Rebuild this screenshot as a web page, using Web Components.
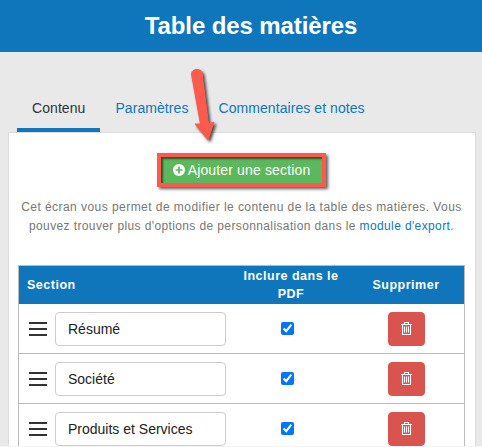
<!DOCTYPE html>
<html lang="fr">
<head>
<meta charset="utf-8">
<title>Table des matières</title>
<style>
  html, body { margin: 0; height: 100%; overflow: hidden; background: #e9e9e9; }
  body { font-family: "Liberation Sans", Arial, sans-serif; }
</style>
</head>
<body>
<toc-page>
  <page-header>Table des matières</page-header>
  <tab-bar>
    <tab-item active>Contenu</tab-item>
    <tab-item>Paramètres</tab-item>
    <tab-item>Commentaires et notes</tab-item>
  </tab-bar>
  <toc-card>
    <add-button>Ajouter une section</add-button>
    <p>Cet écran vous permet de modifier le contenu de la table des matières. Vous <span style="letter-spacing:.38px">pouvez trouver plus d'options de personnalisation dans le <a href="#" style="color:#0f76bc;text-decoration:none">module d'export</a>.</span></p>
    <section-table>
      <section-row value="Résumé"></section-row>
      <section-row value="Société"></section-row>
      <section-row value="Produits et Services"></section-row>
    </section-table>
  </toc-card>
  <callout-arrow></callout-arrow>
</toc-page>

<script>
// Small helper, every component just sets its markup in an open shadow root
class BaseElement extends HTMLElement {
  constructor() {
    super();
    this.attachShadow({ mode: 'open' });
  }
  connectedCallback() {
    this.shadowRoot.innerHTML = this.markup();
  }
}

class TocPage extends BaseElement {
  markup() {
    return `
      <style>
        :host {
          display: flex; flex-direction: column; position: relative; box-sizing: border-box;
          height: 447px; overflow: hidden; border-bottom: 1px solid #f4f4f4;
        }
      </style>
      <slot></slot>
    `;
  }
}

class PageHeader extends BaseElement {
  markup() {
    return `
      <style>
        :host {
          display: flex; align-items: center; justify-content: center; flex: none;
          height: 52px; padding-left: 20px;
          background: #0f76bc; color: #fff;
          font-size: 24px; font-weight: 700; letter-spacing: -.1px;
        }
      </style>
      <slot></slot>
    `;
  }
}

class TabBar extends BaseElement {
  markup() {
    return `
      <style>
        :host { display: flex; flex: none; padding: 36px 0 0 17px; }
      </style>
      <slot></slot>
    `;
  }
}

class TabItem extends BaseElement {
  markup() {
    const active = this.hasAttribute('active');
    return `
      <style>
        :host {
          display: block; padding: 12px 15px 12px;
          font-size: 14px; line-height: 16px; letter-spacing: .07px;
          color: ${active ? '#333' : '#0f76bc'};
          border-bottom: 4px solid ${active ? '#0f76bc' : 'transparent'};
        }
      </style>
      <slot></slot>
    `;
  }
}

class TocCard extends BaseElement {
  markup() {
    return `
      <style>
        :host {
          display: flex; flex-direction: column; flex: 1;
          margin: 0 6px 0 8px; padding: 20px 10px 0 9px;
          background: #fff; border: 1px solid #ddd; border-bottom: 0;
        }
        ::slotted(p) {
          margin: 11px 0 29px; text-align: center; color: #777;
          font-size: 12px; line-height: 19px; letter-spacing: .45px;
        }
      </style>
      <slot></slot>
    `;
  }
}

class AddButton extends BaseElement {
  markup() {
    return `
      <style>
        :host {
          display: flex; align-items: center; justify-content: center; gap: 3px;
          align-self: center; box-sizing: border-box; width: 169px; height: 34px; flex: none;
          background: #5cb85c; color: #fff;
          border: 4px solid #fd5a4e;
          box-shadow: 2px 2px 3px rgba(0,0,0,.65), inset 2px 2px 2px rgba(0,0,0,.55);
          font-size: 14px; letter-spacing: .15px;
        }
        svg { width: 12px; height: 12px; flex: none; }
      </style>
      <svg viewBox="0 0 14 14" aria-hidden="true">
        <circle cx="7" cy="7" r="7" fill="#fff"/>
        <path d="M6 3h2v3h3v2H8v3H6V8H3V6h3z" fill="#5cb85c"/>
      </svg>
      <slot></slot>
    `;
  }
}

class SectionTable extends BaseElement {
  markup() {
    return `
      <style>
        :host { display: block; flex: none; border: 1px solid #bbb; border-bottom: 0; }
        .head {
          display: grid; grid-template-columns: 208px 120px 1fr; align-items: center;
          height: 38px; background: #0f76bc; color: #fff;
          font-size: 12.5px; font-weight: 700; line-height: 18px; letter-spacing: .5px;
        }
        .head div { text-align: center; }
        .head div:first-child { text-align: left; padding-left: 8px; }
        .head div:nth-child(2) { padding-left: 8px; }
        .head div:last-child { padding-left: 1px; }
      </style>
      <div class="head">
        <div>Section</div>
        <div>Inclure dans le PDF</div>
        <div>Supprimer</div>
      </div>
      <slot></slot>
    `;
  }
}

class SectionRow extends BaseElement {
  markup() {
    return `
      <style>
        :host {
          display: grid; grid-template-columns: 208px 120px 1fr; align-items: center;
          height: 50px; box-sizing: border-box; border-bottom: 1px solid #bbb;
        }
        .name { display: flex; align-items: center; gap: 8px; padding-left: 10px; }
        .grip { display: flex; flex-direction: column; gap: 4px; width: 18px; flex: none; }
        .grip i { display: block; height: 2px; background: #333; }
        input[type=text] {
          box-sizing: border-box; width: 171px; height: 34px; margin: 0; padding: 0 12px;
          border: 1px solid #ccc; border-radius: 4px; background: #fff; color: #222; outline: 0;
          font: 14px "Liberation Sans", Arial, sans-serif;
        }
        .check, .del { display: flex; justify-content: center; }
        .del { padding-left: 1px; }
        input[type=checkbox] { margin: 0; width: 13px; height: 13px; accent-color: #0075ff; }
        button {
          display: flex; align-items: center; justify-content: center;
          width: 37px; height: 34px; padding: 0; border: 1px solid #d9534f; border-radius: 4px;
          background: #d9534f;
        }
        svg { width: 11px; height: 13px; }
      </style>
      <div class="name">
        <div class="grip"><i></i><i></i><i></i></div>
        <input type="text" value="${this.getAttribute('value')}">
      </div>
      <div class="check"><input type="checkbox" checked></div>
      <div class="del">
        <button aria-label="Supprimer">
          <svg viewBox="0 0 11 13" fill="none" stroke="#fff" stroke-width="1.1">
            <path d="M0 2.5h11M3.5 2.5V.5h4v2M1.5 2.5v10h8v-10M3.5 4.5v6M5.5 4.5v6M7.5 4.5v6"/>
          </svg>
        </button>
      </div>
    `;
  }
}

// Annotation drawn over the screenshot, free floating on purpose
class CalloutArrow extends BaseElement {
  markup() {
    return `
      <style>
        :host { position: absolute; left: 185px; top: 66px; width: 40px; height: 80px; pointer-events: none; }
        svg { display: block; overflow: visible; filter: drop-shadow(2px 2px 1.5px rgba(0,0,0,.7)); }
      </style>
      <svg width="40" height="80" viewBox="0 0 40 80">
        <path d="M6.6 9 C6 5 9 3.5 12 3.5 C15 3.5 17 5 17.2 8 L23.5 58 L29 56 L23 74 L10 58 L15.5 58 Z" fill="#fd5a4e" stroke="#fd5a4e" stroke-linejoin="round"/>
      </svg>
    `;
  }
}

customElements.define('toc-page', TocPage);
customElements.define('page-header', PageHeader);
customElements.define('tab-bar', TabBar);
customElements.define('tab-item', TabItem);
customElements.define('toc-card', TocCard);
customElements.define('add-button', AddButton);
customElements.define('section-table', SectionTable);
customElements.define('section-row', SectionRow);
customElements.define('callout-arrow', CalloutArrow);
</script>
</body>
</html>
